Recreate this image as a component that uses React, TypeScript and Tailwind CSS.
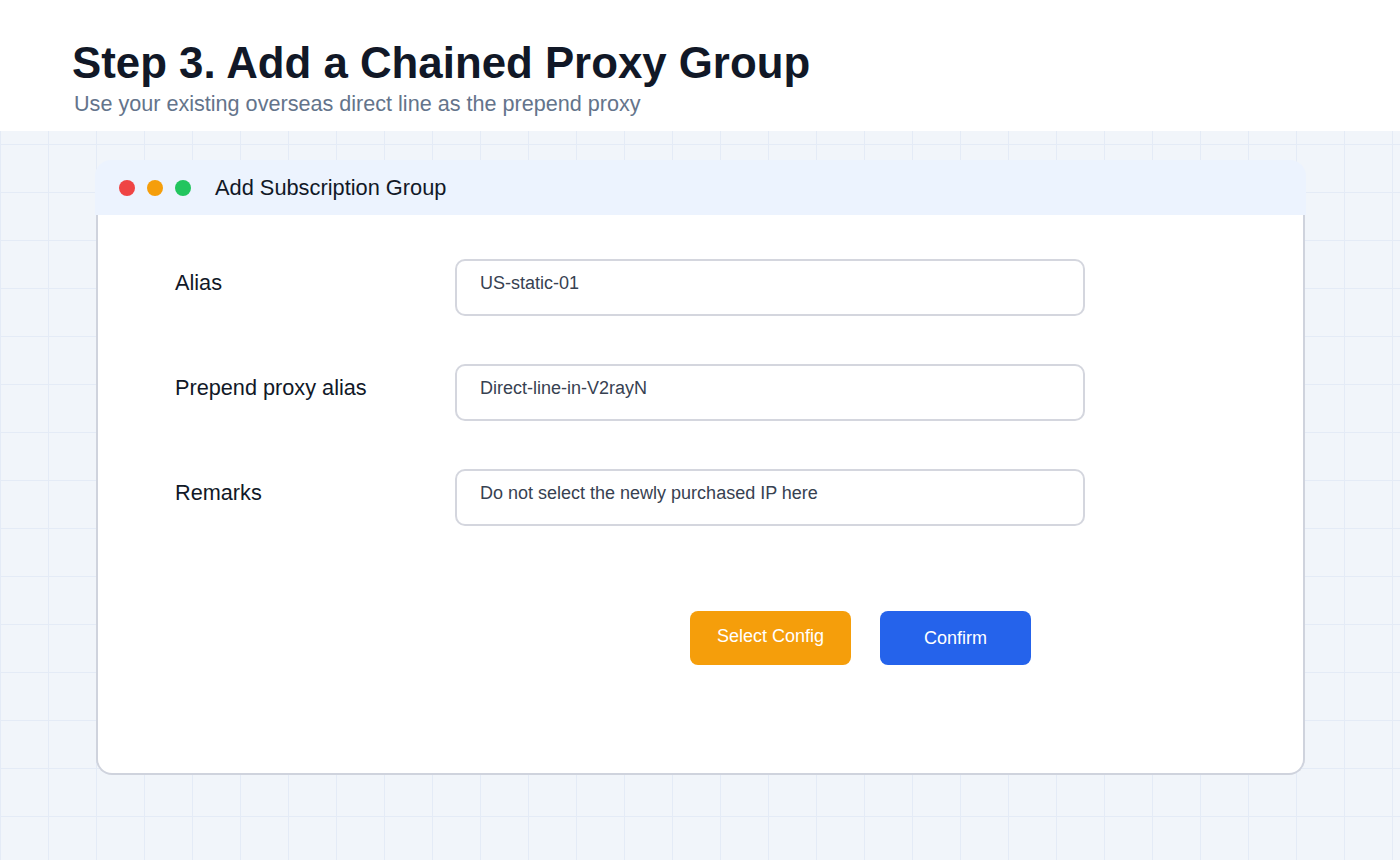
import React from "react";

const font = { fontFamily: '"Liberation Sans", Arial, sans-serif' };

function Row({ label, value }: { label: string; value: string }) {
  return (
    <div className="flex items-start">
      <div className="w-[280px] pt-[11px] text-[21.7px] leading-[26px] text-[#111827]">{label}</div>
      <div className="w-[630px] h-[57px] rounded-[10px] border-2 border-[#d4d6de] bg-white pl-[23px] pt-[11px] text-[18px] leading-[22px] text-[#374151]">
        {value}
      </div>
    </div>
  );
}

export default function App() {
  return (
    <div
      className="relative w-[1400px] h-[860px] overflow-hidden bg-[#f1f5fa] bg-[linear-gradient(to_right,#e4ebf6_1px,transparent_1px),linear-gradient(to_bottom,#e4ebf6_1px,transparent_1px)] bg-[size:48px_48px]"
      style={font}
    >
      <div className="h-[131px] bg-white pl-[72px] pt-[38px]">
        <h1 className="text-[43.8px] leading-[50px] font-bold text-[#111827]">
          Step 3. Add a Chained Proxy Group
        </h1>
        <p className="pl-[2px] text-[21.6px] leading-[26px] text-[#64748b] mt-[3px]">
          Use your existing overseas direct line as the prepend proxy
        </p>
      </div>

      <div className="ml-[95px] mt-[29px] w-[1211px]">
        <div className="h-[55px] rounded-t-[16px] bg-[#ecf3fe] flex items-center pl-[24px]">
          <div className="flex gap-[12px]">
            <span className="w-[16px] h-[16px] rounded-full bg-[#ef4444]" />
            <span className="w-[16px] h-[16px] rounded-full bg-[#f59e0b]" />
            <span className="w-[16px] h-[16px] rounded-full bg-[#22c55e]" />
          </div>
          <span className="ml-[24px] pt-[2px] text-[21.8px] text-[#111827]">Add Subscription Group</span>
        </div>
        <div className="h-[560px] ml-[1px] w-[1209px] bg-white border-x-2 border-b-2 border-[#cfd3dd] rounded-b-[16px] pl-[77px] pt-[44px]">
          <div className="flex flex-col gap-[48px]">
            <Row label="Alias" value="US-static-01" />
            <Row label="Prepend proxy alias" value="Direct-line-in-V2rayN" />
            <Row label="Remarks" value="Do not select the newly purchased IP here" />
          </div>
          <div className="flex gap-[29px] ml-[515px] mt-[85px]">
            <button className="w-[161px] h-[54px] rounded-[8px] bg-[#f59e0b] text-white text-[18px] pb-[4px]">
              Select Config
            </button>
            <button className="w-[151px] h-[54px] rounded-[8px] bg-[#2563eb] text-white text-[18px]">
              Confirm
            </button>
          </div>
        </div>
      </div>
    </div>
  );
}
